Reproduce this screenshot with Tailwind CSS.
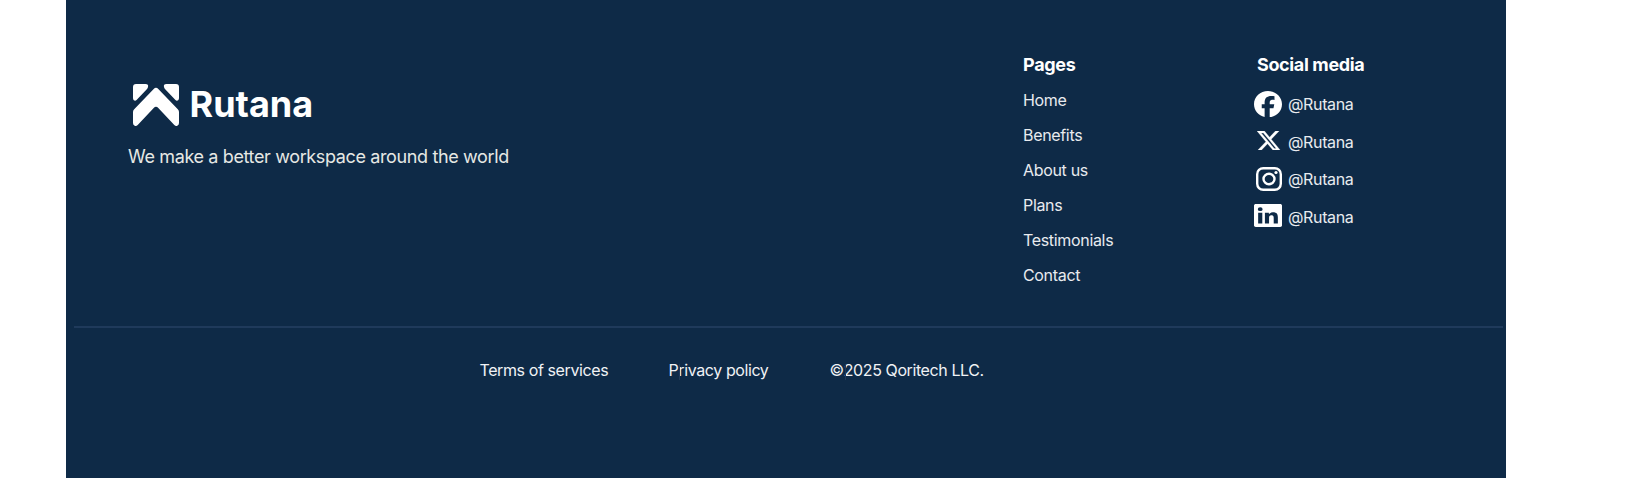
<!DOCTYPE html>
<html lang="en">
<head>
<meta charset="utf-8">
<title>Rutana</title>
<script src="https://cdn.jsdelivr.net/npm/@tailwindcss/browser@4"></script>
</head>
<body class="bg-white font-['Inter',sans-serif] text-white overflow-hidden">
<footer class="ml-[66px] w-[1440px] h-[478px] bg-[#0e2a47] flex flex-col">
  <div class="h-[326px] flex shrink-0">
    <div class="w-[957px] pl-[62px] pt-[84px]">
      <div class="flex h-[42px] pl-[5px] gap-[11px] items-center">
        <svg class="w-[46px] h-[42px] shrink-0" viewBox="0 0 46 42" fill="#fff">
          <path d="M3 0H12.500Q15.800 0 15 3Q14.700 4.200 13.800 5.200L3.800 15.700Q2.300 17.300 .8 16.200Q0 15.500 0 14V3Q0 0 3 0Z"/>
          <path d="M43 0H33.500Q30.200 0 31 3Q31.300 4.200 32.200 5.200L42.200 15.700Q43.700 17.300 45.200 16.200Q46 15.500 46 14V3Q46 0 43 0Z"/>
          <path d="M20.700 4.900Q23 2.600 25.300 4.900L44.800 25.200Q46 26.500 46 28V39Q46 41 44.300 41.700Q42.700 42.300 41.300 41L25.300 24Q23 21.700 20.700 24L4.700 41Q3.300 42.300 1.700 41.700Q0 41 0 39V28Q0 26.500 1.200 25.200Z"/>
        </svg>
        <span class="text-[36px] leading-[42px] font-bold -mt-[2px] -ml-[0.5px]">Rutana</span>
      </div>
      <p class="mt-[19px] text-[18px] leading-[24px] tracking-[-0.37px] text-[#e6e8e4] whitespace-nowrap">We make a better workspace around the world</p>
    </div>
    <nav class="w-[231px] pt-[52px]">
      <h2 class="text-[18px] leading-[25px] font-bold tracking-[-0.3px] mb-[6px]">Pages</h2>
      <ul class="text-[16px] leading-[35px] tracking-[-0.33px] text-[#e8ebef]">
        <li>Home</li><li>Benefits</li><li>About us</li><li>Plans</li><li>Testimonials</li><li>Contact</li>
      </ul>
    </nav>
    <div class="pt-[52px]">
      <h2 class="pl-[3px] text-[18px] leading-[25px] font-bold tracking-[-0.36px] mb-[8px]">Social media</h2>
      <ul class="text-[16px] leading-[39.6px] tracking-[-0.35px] text-[#e8ebef]">
        <li class="flex h-[37.6px] gap-[6px]">
          <svg class="w-[28px] h-[26px] mt-[6px]" viewBox="0 0 24 23.700" preserveAspectRatio="none" fill="#fff"><path d="M9.101 23.691v-7.980H6.627v-3.667h2.474v-1.580c0-4.085 1.848-5.978 5.858-5.978.401 0 .955.042 1.468.103a8.680 8.680 0 0 1 1.141.195v3.325a8.623 8.623 0 0 0-.653-.036 26.805 26.805 0 0 0-.733-.009c-.707 0-1.259.096-1.675.309a1.686 1.686 0 0 0-.679.622c-.258.420-.374.995-.374 1.752v1.297h3.919l-.386 2.103-.287 1.564h-3.246v8.245C19.396 23.238 24 18.179 24 12.044c0-6.627-5.373-12-12-12s-12 5.373-12 12c0 5.628 3.874 10.350 9.101 11.647Z"/></svg>
          <span>@Rutana</span></li>
        <li class="flex h-[37.6px] gap-[6px]">
          <svg class="w-[23.500px] h-[19.500px] ml-[3px] mr-[1.500px] mt-[8px]" viewBox="0 1.150 24 21.700" preserveAspectRatio="none" fill="#fff" stroke="#fff" stroke-width=".3"><path d="M18.901 1.153h3.680l-8.040 9.190L24 22.846h-7.406l-5.800-7.584-6.638 7.584H.474l8.600-9.830L0 1.154h7.594l5.243 6.932ZM17.610 20.644h2.039L6.486 3.240H4.298Z"/></svg>
          <span>@Rutana</span></li>
        <li class="flex h-[37.6px] gap-[6px]">
          <svg class="w-[26px] h-[24px] ml-[2px] mt-[6.500px]" viewBox="0 0 26 24" fill="none" stroke="#fff" stroke-width="2.400"><rect x="1.200" y="1.200" width="23.600" height="21.600" rx="6"/><ellipse cx="13" cy="12" rx="5.500" ry="5.200"/><ellipse cx="20" cy="5.600" rx="1.600" ry="1.500" fill="#fff" stroke="none"/></svg>
          <span>@Rutana</span></li>
        <li class="flex h-[37.6px] gap-[6px]">
          <svg class="w-[28px] h-[23px] mt-[6px]" viewBox="0 0 24 24" preserveAspectRatio="none" fill="#fff"><path d="M20.447 20.452h-3.554v-5.569c0-1.328-.027-3.037-1.852-3.037-1.853 0-2.136 1.445-2.136 2.939v5.667H9.351V9h3.414v1.561h.046c.477-.900 1.637-1.850 3.370-1.850 3.601 0 4.267 2.370 4.267 5.455v6.286zM5.337 7.433a2.062 2.062 0 1 1 0-4.126 2.062 2.062 0 0 1 0 4.126zM7.119 20.452H3.555V9h3.564v11.452zM22.500 0H1.500C.7 0 0 .7 0 1.500v21C0 23.300.7 24 1.500 24h21C23.300 24 24 23.300 24 22.500V1.500C24 .7 23.300 0 22.500 0z"/></svg>
          <span>@Rutana</span></li>
      </ul>
    </div>
  </div>
  <div class="ml-[7.5px] w-[1429.5px] h-[2px] bg-[#1f3a5b] shrink-0"></div>
  <div class="relative pt-[30px] pl-[413.5px] flex text-[16px] leading-[24px] tracking-[-0.4px] whitespace-nowrap text-[#f0f2f5]">
    <span class="w-[189px]">Terms of services</span>
    <span class="w-[161px]">Privacy policy</span>
    <span>©2025 Qoritech LLC.</span>
    <i class="absolute left-[613px] top-[36px] w-px h-[16px] bg-[#1f3a5b]"></i>
    <i class="absolute left-[779px] top-[36px] w-px h-[16px] bg-[#1f3a5b]"></i>
  </div>
</footer>
</body>
</html>
